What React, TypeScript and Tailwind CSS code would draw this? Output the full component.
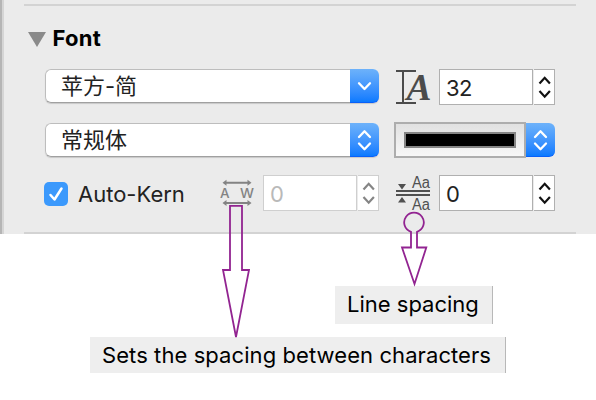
import React from "react";

const latin = "font-['Inter','Noto_Sans_CJK_SC',sans-serif]";

function Chevrons({ double = true }: { double?: boolean }) {
  return (
    <div className="flex h-[34px] w-[29px] shrink-0 items-center justify-center rounded-r-[6px] border-b border-[#0a60f8] bg-gradient-to-b from-[#6db2fa] to-[#087aff]">
      <svg width="29" height="34" viewBox="0 0 29 34" className="shrink-0" fill="none" stroke="white" strokeWidth="2.3" strokeLinecap="round" strokeLinejoin="round">
        {double ? <path d="M9 14 14.5 8.3 20 14M9 20.5 14.5 26.2 20 20.5" /> : <path d="M9 14.3 14.5 20 20 14.3" />}
      </svg>
    </div>
  );
}

function Select({ label, double }: { label: string; double?: boolean }) {
  return (
    <div className="flex h-[34px] w-[334px] shrink-0 rounded-[6px] bg-white shadow-[0_1px_1px_#c8c8c8]">
      <div className="flex flex-1 items-center rounded-l-[6px] border border-r-0 border-[#bdbdbd] border-b-[#a0a0a0] pl-[15px] font-['Inter','Noto_Sans_CJK_SC',sans-serif] text-[22px] leading-[30px] text-[#222]">
        <span>{label}</span>
      </div>
      <Chevrons double={double} />
    </div>
  );
}

function NumberField({ value, disabled = false }: { value: string; disabled?: boolean }) {
  const edge = disabled ? "border-[#cfcfcf]" : "border-[#b0b0b0]";
  return (
    <div className="flex h-9 shrink-0">
      <div className={`flex w-[94px] items-center border bg-white pl-[6px] text-[22px] ${edge} ${disabled ? "text-[#b9b9b9]" : "text-[#222]"}`}>
        <span className="relative top-px tracking-[-0.6px]">{value}</span>
      </div>
      <div className={`ml-px w-[21px] border border-l-0 bg-white ${edge}`}>
        <svg width="20" height="34" viewBox="0 0 20 34" fill="none" stroke={disabled ? "#858585" : "#111"} strokeWidth="2.2">
          <path d="M5.5 13.5 10.7 7.8 15.9 13.5M5.5 21 10.7 26.7 15.9 21" />
        </svg>
      </div>
    </div>
  );
}

function SizeIcon() {
  return (
    <svg width="40" height="36" viewBox="0 0 40 36" className="shrink-0 overflow-visible">
      <path d="M0 2H20M0 34H20M7 2V34" fill="none" stroke="#4b4b4b" strokeWidth="2" />
      <text x="10.5" y="31" fontSize="38" fontWeight="700" fontStyle="italic" fill="#4b4b4b" fontFamily="Liberation Serif, serif" textLength="25" lengthAdjust="spacingAndGlyphs">A</text>
    </svg>
  );
}

function KernIcon() {
  return (
    <svg width="38" height="36" viewBox="0 0 38 36" className="shrink-0">
      <g fill="#838383">
        <path d="M2.5 7.8 6.5 4.8V6.8H27.5V4.8L31.5 7.8 27.5 10.8V8.8H6.5V10.8ZM2.5 28 6.5 25V27H27.5V25L31.5 28 27.5 31V29H6.5V31Z" />
        <text x="0" y="22.5" fontSize="13.5" fontWeight="500" fontFamily="Inter, sans-serif">A</text>
        <text x="20" y="22.5" fontSize="13.5" fontWeight="500" fontFamily="Inter, sans-serif" textLength="14" lengthAdjust="spacingAndGlyphs">W</text>
      </g>
    </svg>
  );
}

function LineIcon() {
  return (
    <svg width="38" height="38" viewBox="0 0 38 38" className="shrink-0 overflow-visible">
      <g fill="#505050">
        <path d="M0 15H34V17H0ZM0 19H34V21H0ZM2 9H10L6 14.5ZM2 27.5H10L6 22Z" />
        <text x="16" y="12.7" fontSize="16" fontFamily="Liberation Sans, sans-serif" textLength="18" lengthAdjust="spacingAndGlyphs">Aa</text>
        <text x="16" y="34.5" fontSize="16" fontFamily="Liberation Sans, sans-serif" textLength="18" lengthAdjust="spacingAndGlyphs">Aa</text>
      </g>
    </svg>
  );
}

export default function App() {
  return (
    <div className={`relative h-[400px] w-[596px] overflow-hidden bg-white ${latin}`}>
      <section className="flex h-[234px] bg-[#ebebeb]">
        <div className="w-0.5 bg-[#b5b5b5]" />
        <div className="w-0.5 bg-[#d5d5d5]" />
        <div className="flex w-[592px] flex-col pt-1">
          <div className="ml-5 h-0.5 w-[552px] shrink-0 bg-[#d3d3d3]" />
          <header className="mt-4 flex h-8 shrink-0 items-center pl-6">
            <svg width="18" height="15" viewBox="0 0 18 15" className="mt-0.5"><path d="M0 0H18L9 15Z" fill="#8a8a8a" /></svg>
            <h2 className="ml-[6.5px] text-[22px] font-bold leading-8 tracking-[0.3px] text-black">Font</h2>
          </header>
          <div className="mt-[15px] flex h-9 shrink-0 pl-[41px]">
            <Select label="苹方-简" double={false} />
            <div className="ml-[17px] flex w-[43px]"><SizeIcon /></div>
            <NumberField value="32" />
          </div>
          <div className="mt-[17px] flex h-9 shrink-0 pl-[41px]">
            <div className="pt-px"><Select label="常规体" double /></div>
            <div className="ml-[15px] flex h-9 w-[132px] items-center justify-center border-2 border-[#adadad] bg-gradient-to-b from-[#e1e1e1] to-[#f7f7f7]">
              <div className="h-4 w-28 border-2 border-[#858585] bg-black" />
            </div>
            <div className="pt-px"><Chevrons /></div>
          </div>
          <div className="mt-[17px] flex h-9 shrink-0 pl-10">
            <div className="mt-[7px] flex h-6 w-6 items-center justify-center rounded-[5px] bg-[#3b99fc]">
              <svg width="24" height="24" viewBox="0 0 24 24"><path d="m6.5 13 4 4.5 7-11" fill="none" stroke="white" strokeWidth="2.5" strokeLinecap="round" strokeLinejoin="round" /></svg>
            </div>
            <span className="ml-[10px] w-[142px] whitespace-nowrap text-[22px] leading-[38px] text-[#222]">Auto-Kern</span>
            <div className="w-[43px]"><KernIcon /></div>
            <NumberField value="0" disabled />
            <div className="ml-[17px] w-[43px]"><LineIcon /></div>
            <NumberField value="0" />
          </div>
          <div className="ml-5 mt-auto h-0.5 w-[552px] shrink-0 bg-[#d3d3d3]" />
        </div>
      </section>
      <div className="ml-[335px] mt-[52px] h-[38px] w-[158px] whitespace-nowrap border-r border-[#b8b8b8] bg-[#eee] pl-3 text-[22px] leading-[37px] text-black">Line spacing</div>
      <div className="ml-[90px] mt-[13px] h-9 w-[416px] whitespace-nowrap border-r border-[#b8b8b8] bg-[#eee] pl-3 text-[22px] leading-[37px] tracking-[0.08px] text-black">Sets the spacing between characters</div>
      <svg className="absolute left-0 top-0" width="596" height="400" viewBox="0 0 596 400" fill="none" stroke="#922491" strokeWidth="1.8">
        <path d="M230 205.8H242V270H249L236 337 223 270H230Z" />
        <path d="M411 231.8A9.8 9.8 0 1 1 417 231.8V247.5H426.3L414.5 284 402 247.5H411Z" />
      </svg>
    </div>
  );
}
